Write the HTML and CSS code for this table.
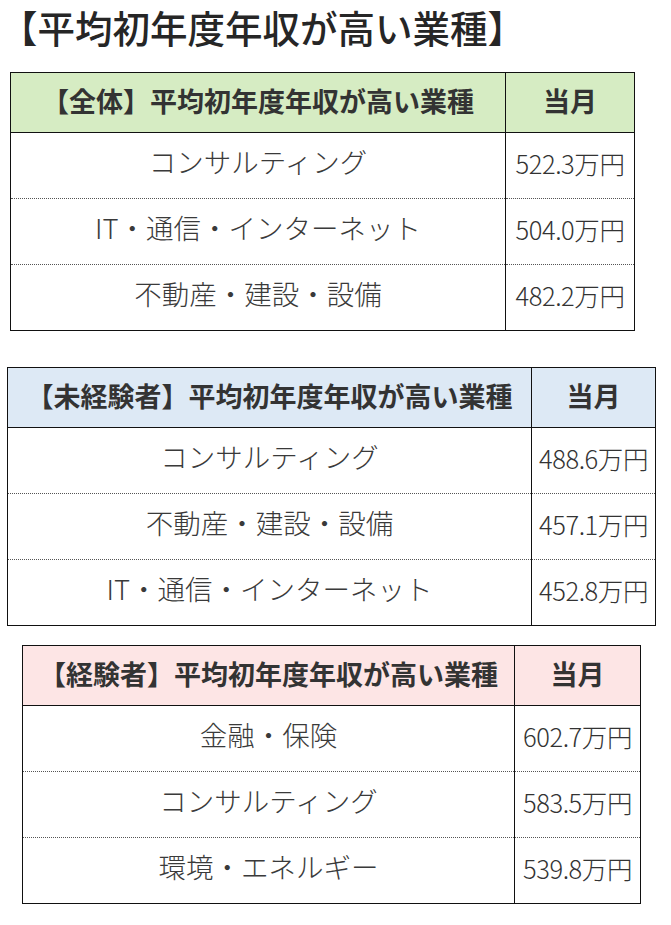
FILE: index.html
```html
<!DOCTYPE html>
<html lang="ja">
<head>
<meta charset="utf-8">
<link rel="stylesheet" href="styles.css">
</head>
<body>
<div class="page">
  <h1 class="title">【平均初年度年収が高い業種】</h1>

  <table class="rank rank-all">
    <thead>
      <tr><th class="name">【全体】平均初年度年収が高い業種</th><th class="val">当月</th></tr>
    </thead>
    <tbody>
      <tr><td class="name">コンサルティング</td><td class="val">522.3万円</td></tr>
      <tr><td class="name">IT・通信・インターネット</td><td class="val">504.0万円</td></tr>
      <tr><td class="name">不動産・建設・設備</td><td class="val">482.2万円</td></tr>
    </tbody>
  </table>

  <table class="rank rank-new">
    <thead>
      <tr><th class="name">【未経験者】平均初年度年収が高い業種</th><th class="val">当月</th></tr>
    </thead>
    <tbody>
      <tr><td class="name">コンサルティング</td><td class="val">488.6万円</td></tr>
      <tr><td class="name">不動産・建設・設備</td><td class="val">457.1万円</td></tr>
      <tr><td class="name">IT・通信・インターネット</td><td class="val">452.8万円</td></tr>
    </tbody>
  </table>

  <table class="rank rank-exp">
    <thead>
      <tr><th class="name">【経験者】平均初年度年収が高い業種</th><th class="val">当月</th></tr>
    </thead>
    <tbody>
      <tr><td class="name">金融・保険</td><td class="val">602.7万円</td></tr>
      <tr><td class="name">コンサルティング</td><td class="val">583.5万円</td></tr>
      <tr><td class="name">環境・エネルギー</td><td class="val">539.8万円</td></tr>
    </tbody>
  </table>
</div>
</body>
</html>
```

FILE: styles.css
```css
html, body {
  margin: 0;
  padding: 0;
  background: #ffffff;
}

body {
  font-family: "Noto Sans CJK JP", "Noto Sans", sans-serif;
  color: #333333;
}

.page {
  display: flex;
  flex-direction: column;
  align-items: flex-start;
  width: 671px;
}

.title {
  margin: 0;
  padding: 4px 0 0 0;
  height: 66px;
  box-sizing: border-box;
  font-size: 37.5px;
  line-height: 46px;
  font-weight: 500;
  color: #262626;
  white-space: nowrap;
}

.rank {
  border-collapse: collapse;
  border: 1.5px solid #111111;
  table-layout: fixed;
}

.rank th,
.rank td {
  padding: 0;
  text-align: center;
  white-space: nowrap;
}

.rank th {
  height: 55px;
  padding-bottom: 4px;
  font-size: 27px;
  font-weight: 700;
  color: #333333;
  border-bottom: 1.5px solid #111111;
}

.rank td {
  height: 55px;
  padding-bottom: 10px;
  font-size: 27.5px;
  font-weight: 300;
  color: #3a3a3a;
  border-bottom: 1px dotted #555555;
}

.rank tbody tr:last-child td {
  border-bottom: none;
}

.rank .val {
  border-left: 1.5px solid #111111;
}

.rank td.val {
  font-size: 25.5px;
  font-weight: 300;
  color: #333333;
  letter-spacing: -0.4px;
  padding-bottom: 6px;
  height: 59px;
}

/* table 1 */
.rank-all {
  margin: 6px 0 0 10px;
  width: 625px;
}
.rank-all .name { width: 494px; }
.rank-all th { background: #d6ecc3; }

/* table 2 */
.rank-new {
  margin: 36px 0 0 7px;
  width: 649px;
}
.rank-new .name { width: 523px; }
.rank-new th { background: #dde9f5; }

/* table 3 */
.rank-exp {
  margin: 19px 0 0 22px;
  width: 619px;
}
.rank-exp .name { width: 491px; }
.rank-exp th { background: #fde5e5; }
```
